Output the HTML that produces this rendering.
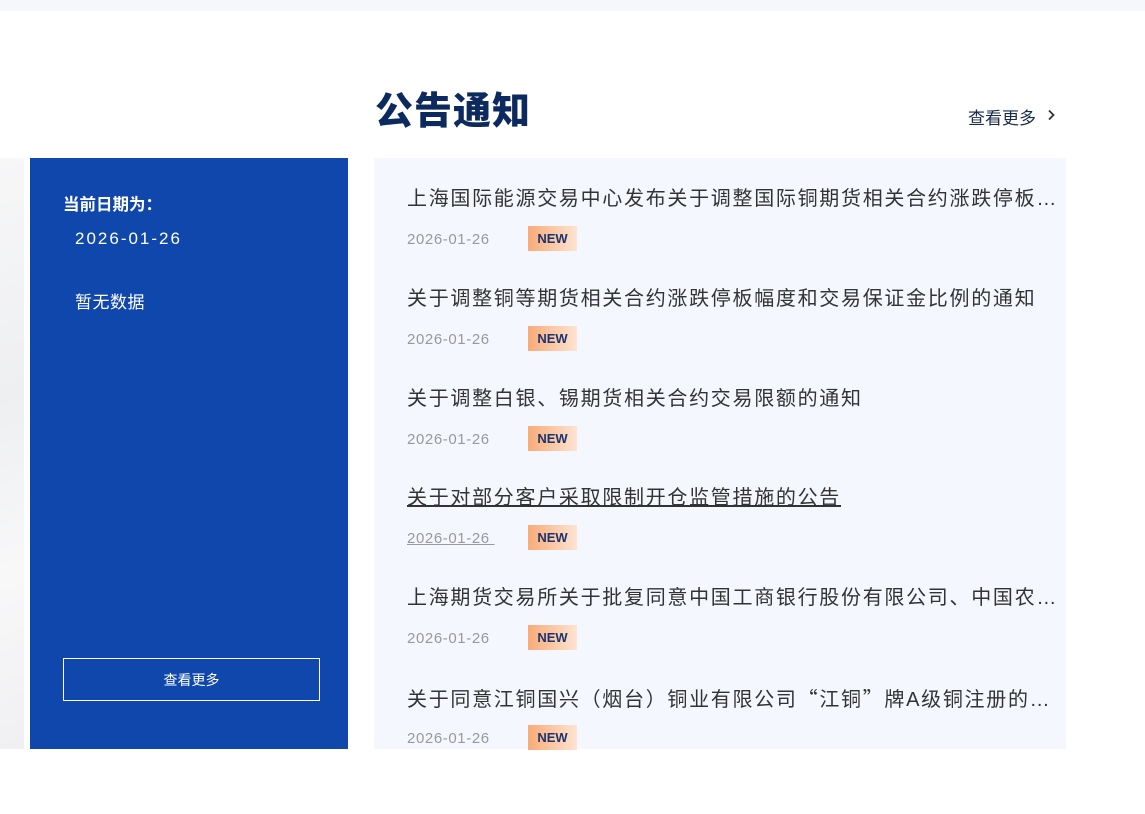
<!DOCTYPE html>
<html><head><meta charset="utf-8"><style>
*{margin:0;padding:0;box-sizing:border-box}
body{width:1145px;height:814px;background:#fff;position:relative;overflow:hidden;font-family:"Liberation Sans","Noto Sans CJK SC",sans-serif}
.top{position:absolute;left:0;top:0;width:1145px;height:11px;background:#f5f7fc}
.bgl{position:absolute;left:0;top:158px;width:24px;height:591px;background:linear-gradient(160deg,#f7f7f8,#eeeff1 40%,#f8f8f9 70%,#f0f0f2)}
.panel{position:absolute;left:30px;top:158px;width:318px;height:591px;background:#0f47ad;color:#fff}
.panel .l{position:absolute;left:33px;top:33px;font-size:16.5px;font-weight:bold}
.panel .d{position:absolute;left:45px;top:71px;font-size:17px;letter-spacing:2px}
.panel .n{position:absolute;left:45px;top:130px;font-size:17px;letter-spacing:0.5px}
.panel .b{position:absolute;left:33px;top:500px;width:257px;height:43px;border:1px solid #fff;text-align:center;line-height:43px;font-size:14px}
h1{position:absolute;left:375px;top:80px;font-size:38px;color:#0d2a5f;font-weight:900;letter-spacing:1px}
.more{position:absolute;left:968px;top:104px;font-size:17px;color:#1a2a4a;width:100px}
.more svg{position:absolute;left:79px;top:5px}
.list{position:absolute;left:374px;top:158px;width:692px;height:591px;background:#f4f7fd}
.it{position:absolute;left:33px;width:650px}
.t{font-size:20px;letter-spacing:1.7px;color:#333;white-space:nowrap;overflow:hidden;text-overflow:ellipsis;height:32px;line-height:32px}
.q{font-family:"Noto Sans CJK SC",sans-serif}
.dt{position:absolute;left:0;top:48px;font-size:15px;letter-spacing:0.6px;color:#999}
.nw{position:absolute;left:121px;top:43px;width:49px;height:25px;background:linear-gradient(90deg,#f8ab78,#fde4d2);color:#1b3470;font-weight:bold;font-size:13px;text-align:center;line-height:25px}
.u .t,.u .dt{text-decoration:underline}
</style></head><body>
<div class="top"></div>
<div class="bgl"></div>
<div class="panel">
<div class="l">当前日期为：</div>
<div class="d">2026-01-26</div>
<div class="n">暂无数据</div>
<div class="b">查看更多</div>
</div>
<h1>公告通知</h1>
<div class="more">查看更多<svg width="9" height="12" viewBox="0 0 9 12"><path d="M2 1.5L6.5 6L2 10.5" stroke="#333" stroke-width="1.8" fill="none"/></svg></div>
<div class="list">
<div class="it" style="top:25px"><div class="t">上海国际能源交易中心发布关于调整国际铜期货相关合约涨跌停板幅度和交易保证金比例的通知</div><div class="dt">2026-01-26</div><div class="nw">NEW</div></div>
<div class="it" style="top:125px"><div class="t">关于调整铜等期货相关合约涨跌停板幅度和交易保证金比例的通知</div><div class="dt">2026-01-26</div><div class="nw">NEW</div></div>
<div class="it" style="top:225px"><div class="t">关于调整白银、锡期货相关合约交易限额的通知</div><div class="dt">2026-01-26</div><div class="nw">NEW</div></div>
<div class="it u" style="top:324px"><div class="t">关于对部分客户采取限制开仓监管措施的公告</div><div class="dt">2026-01-26&nbsp;</div><div class="nw" style="text-decoration:none">NEW</div></div>
<div class="it" style="top:424px"><div class="t">上海期货交易所关于批复同意中国工商银行股份有限公司、中国农业银行股份有限公司</div><div class="dt">2026-01-26</div><div class="nw">NEW</div></div>
<div class="it" style="top:524px"><div class="t">关于同意江铜国兴（烟台）铜业有限公司<span class="q">“</span>江铜<span class="q">”</span>牌A级铜注册的公告</div><div class="dt">2026-01-26</div><div class="nw">NEW</div></div>
</div>
</body></html>
